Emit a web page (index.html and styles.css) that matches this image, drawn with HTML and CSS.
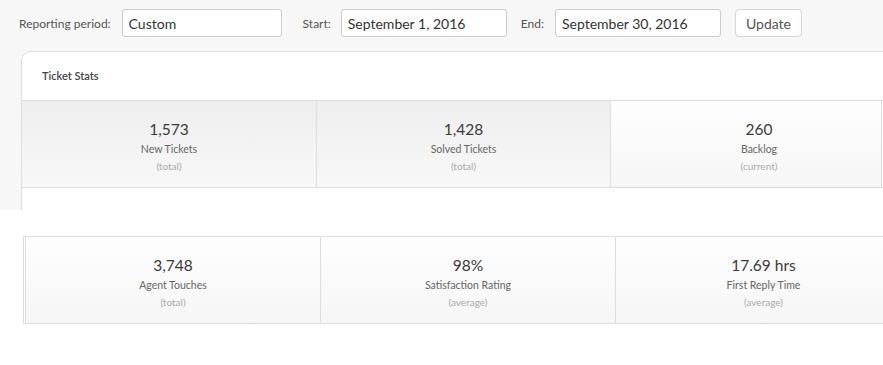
FILE: index.html
```html
<!DOCTYPE html>
<html lang="en">
<head>
    <meta charset="UTF-8">
    <meta name="viewport" content="width=device-width, initial-scale=1.0">
    <title>Ticket Stats</title>
    <link rel="stylesheet" href="styles.css">
</head>
<body>
    <div class="top">
        <div class="toolbar">
            <label class="field-label">Reporting period:</label>
            <input type="text" class="field period" value="Custom">
            <label class="field-label start-label">Start:</label>
            <input type="text" class="field date" value="September 1, 2016">
            <label class="field-label end-label">End:</label>
            <input type="text" class="field date" value="September 30, 2016">
            <button class="update-btn">Update</button>
        </div>

        <div class="card">
            <div class="card-title">Ticket Stats</div>
            <div class="stats">
                <div class="stat shaded">
                    <div class="stat-value">1,573</div>
                    <div class="stat-label">New Tickets</div>
                    <div class="stat-note">(total)</div>
                </div>
                <div class="stat shaded">
                    <div class="stat-value">1,428</div>
                    <div class="stat-label">Solved Tickets</div>
                    <div class="stat-note">(total)</div>
                </div>
                <div class="stat last">
                    <div class="stat-value">260</div>
                    <div class="stat-label">Backlog</div>
                    <div class="stat-note">(current)</div>
                </div>
            </div>
        </div>
    </div>

    <div class="bottom">
        <div class="stats stats-alt">
            <div class="stat">
                <div class="stat-value">3,748</div>
                <div class="stat-label">Agent Touches</div>
                <div class="stat-note">(total)</div>
            </div>
            <div class="stat">
                <div class="stat-value">98%</div>
                <div class="stat-label">Satisfaction Rating</div>
                <div class="stat-note">(average)</div>
            </div>
            <div class="stat last">
                <div class="stat-value">17.69 hrs</div>
                <div class="stat-label">First Reply Time</div>
                <div class="stat-note">(average)</div>
            </div>
        </div>
    </div>
</body>
</html>
```

FILE: styles.css
```css
body {
    font-family: Lato, "Open Sans", Arial, sans-serif;
    background-color: #ffffff;
    margin: 0;
    padding: 0;
    overflow: hidden;
}
.top {
    background-color: #f7f7f7;
    height: 210px;
    overflow: hidden;
    padding-left: 21px;
}
.toolbar {
    display: flex;
    align-items: center;
    height: 28px;
    padding-top: 9px;
    margin-left: -2px;
}
.field-label {
    font-size: 12px;
    color: #555;
    margin-right: 11px;
}
.start-label {
    margin-left: 21px;
    margin-right: 10px;
}
.end-label {
    margin-left: 14px;
    margin-right: 11px;
}
.field {
    box-sizing: border-box;
    height: 28px;
    padding: 0 6px;
    font-family: inherit;
    font-size: 14px;
    color: #333;
    background-color: #fff;
    border: 1px solid #ccc;
    border-radius: 3px;
    outline: none;
}
.period {
    width: 160px;
}
.date {
    width: 166px;
}
.update-btn {
    box-sizing: border-box;
    height: 28px;
    width: 67px;
    margin-left: 14px;
    font-family: inherit;
    font-size: 14px;
    color: #555;
    background-color: #fff;
    border: 1px solid #d5d5d5;
    border-radius: 4px;
    padding: 0;
}
.card {
    margin-top: 14px;
    width: 1000px;
    height: 300px;
    background-color: #fff;
    border: 1px solid #ddd;
    border-top-left-radius: 10px;
}
.card-title {
    height: 48px;
    line-height: 48px;
    padding-left: 20px;
    font-size: 11px;
    font-weight: 600;
    color: #444;
}
.stats {
    display: flex;
    border-top: 1px solid #ddd;
    border-bottom: 1px solid #ddd;
}
.stat {
    box-sizing: border-box;
    width: 295px;
    height: 86px;
    padding-top: 18px;
    text-align: center;
    border-right: 1px solid #ddd;
    background: linear-gradient(to bottom, #fefefe, #f6f6f6);
}
.stat.shaded {
    width: 295px;
    background: linear-gradient(to bottom, #eeeeee, #f8f8f8);
}
.stat.shaded + .stat.shaded {
    width: 294px;
}
.stat.last {
    width: 271px;
    padding-left: 26px;
}
.stat-value {
    font-size: 15.5px;
    line-height: 20px;
    color: #3a3a3a;
}
.stat-label {
    margin-top: 3px;
    font-size: 10.5px;
    line-height: 14px;
    color: #666;
}
.stat-note {
    margin-top: 4px;
    font-size: 10px;
    line-height: 13px;
    color: #aaa;
}
.bottom {
    padding-top: 26px;
    padding-left: 23px;
}
.stats-alt {
    width: 860px;
    border-left: 1px solid #ddd;
    padding-left: 1px;
}
.stats-alt .stat {
    border-left: 1px solid #ddd;
    border-right: none;
    width: 295px;
}
.stats-alt .stat.last {
    width: 268px;
    padding-left: 28px;
}
```
